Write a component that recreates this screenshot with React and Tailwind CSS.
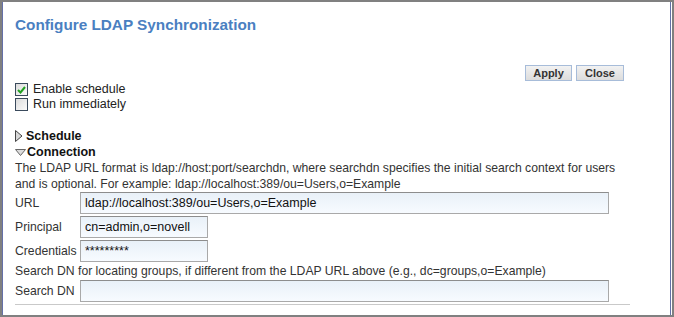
import React, { useState } from "react";

function Checkbox({ checked, label, onChange }) {
  return (
    <label className="flex h-[15px] items-center">
      <span
        onClick={onChange}
        className="flex h-[13px] w-[13px] items-center justify-center border border-[#3a4a5c] bg-linear-to-br from-[#dcdcdc] to-[#fbfbfb]"
      >
        {checked && (
          <svg width="9" height="8" viewBox="0 0 9 8">
            <path d="M1 4 L3.5 6.5 L8 1" fill="none" stroke="#21a121" strokeWidth="2" />
          </svg>
        )}
      </span>
      <span className="ml-[5px] text-[12.5px] leading-[15px] text-[#222]">{label}</span>
    </label>
  );
}

function FormRow({ label, value, wide }) {
  return (
    <div className="flex items-center">
      <div className="w-[65px] text-[12.2px] text-[#333]">{label}</div>
      <input
        type="text"
        defaultValue={value}
        className={
          (wide ? "w-[529px]" : "w-[128px]") +
          " h-[22px] border border-[#a9a9a9] border-t-[#8d8d8d] bg-linear-to-b from-[#e9f1f8] to-[#f7fbff] px-[4px] text-[12.5px] text-[#111] outline-none"
        }
      />
    </div>
  );
}

export default function App() {
  const [enableSchedule, setEnableSchedule] = useState(true);
  const [runNow, setRunNow] = useState(false);

  return (
    <div
      className="h-[317px] w-[674px] overflow-hidden border-2 border-[#808080] bg-white"
      style={{ fontFamily: '"Liberation Sans", Arial, sans-serif' }}
    >
      <div className="mr-px h-full border-x border-[#6570a8] pl-[12px] pr-[46px]">
        <h1 className="pt-[14px] text-[15.3px] font-bold leading-[18px] text-[#4a7fc1]">
          Configure LDAP Synchronization
        </h1>

        <div className="mt-[31px] flex justify-end gap-[4px]">
          <button className="h-[16px] w-[47px] border border-[#a7bcd9] bg-linear-to-b from-[#f2f2f2] to-[#dcdcdc] text-[11px] font-bold leading-[14px] text-[#333]">
            Apply
          </button>
          <button className="h-[16px] w-[48px] border border-[#a7bcd9] bg-linear-to-b from-[#f2f2f2] to-[#dcdcdc] text-[11px] font-bold leading-[14px] text-[#333]">
            Close
          </button>
        </div>

        <div className="mt-px">
          <Checkbox
            checked={enableSchedule}
            label="Enable schedule"
            onChange={() => setEnableSchedule(!enableSchedule)}
          />
          <Checkbox checked={runNow} label="Run immediately" onChange={() => setRunNow(!runNow)} />
        </div>

        <div className="mt-[16px] flex h-[16px] items-center">
          <svg width="8" height="12" viewBox="0 0 8 12">
            <path d="M0.5 0.5 L7 6 L0.5 11.5 Z" fill="#d8d8d8" stroke="#444" />
          </svg>
          <span className="ml-[3px] text-[12.5px] font-bold text-[#111]">Schedule</span>
        </div>
        <div className="flex h-[16px] items-center">
          <svg width="11" height="7" viewBox="0 0 11 7">
            <path d="M0.5 0.5 L10.5 0.5 L5.5 6.5 Z" fill="#dcdcdc" stroke="#666" />
          </svg>
          <span className="ml-px text-[12.5px] font-bold text-[#111]">Connection</span>
        </div>

        <p className="mr-[-12px] text-[12.2px] leading-[16px] text-[#333]">
          The LDAP URL format is ldap://host:port/searchdn, where searchdn specifies the initial search
          context for users and is optional. For example: ldap://localhost:389/ou=Users,o=Example
        </p>

        <div className="flex flex-col gap-[2px]">
          <FormRow label="URL" value="ldap://localhost:389/ou=Users,o=Example" wide />
          <FormRow label="Principal" value="cn=admin,o=novell" />
          <FormRow label="Credentials" value="*********" />
        </div>

        <div className="h-[18px] text-[12.2px] leading-[18px] text-[#333]">
          Search DN for locating groups, if different from the LDAP URL above (e.g., dc=groups,o=Example)
        </div>
        <FormRow label="Search DN" value="" wide />

        <div className="mr-[-6px] mt-[2px] h-px bg-[#c9c9c9]" />
      </div>
    </div>
  );
}
